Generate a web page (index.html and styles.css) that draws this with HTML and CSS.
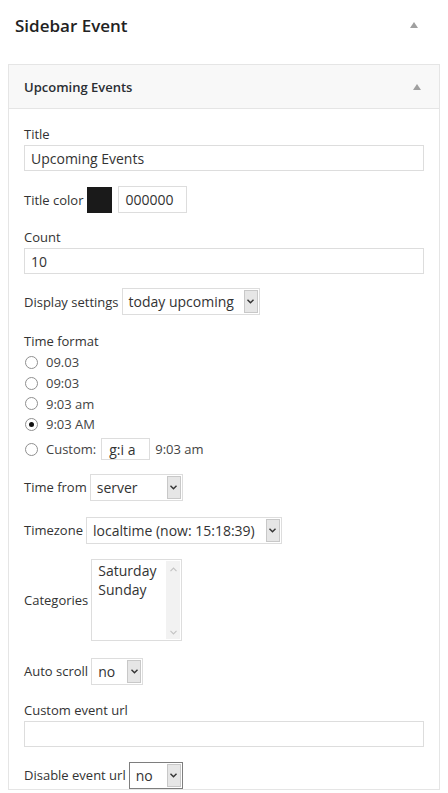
FILE: index.html
```html
<!DOCTYPE html>
<html>
<head>
<meta charset="utf-8">
<link rel="stylesheet" href="styles.css">
</head>
<body>
<div class="page">
  <div class="sidebar-head">
    <h2 class="sidebar-title">Sidebar Event</h2>
    <span class="tri"></span>
  </div>
  <div class="widget">
    <div class="widget-head">
      <h3 class="widget-title">Upcoming Events</h3>
      <span class="tri"></span>
    </div>
    <div class="widget-body">
      <div class="field">
        <div class="label">Title</div>
        <div class="input wide">Upcoming Events</div>
      </div>
      <div class="row r-color">
        <span class="label">Title color</span>
        <span class="swatch"></span>
        <span class="input hex">000000</span>
      </div>
      <div class="field f-count">
        <div class="label">Count</div>
        <div class="input wide">10</div>
      </div>
      <div class="row r-display">
        <span class="label">Display settings</span>
        <span class="select s-display"><span class="val">today upcoming</span><span class="arrow"><svg width="7" height="5" viewBox="0 0 7 5"><path d="M0.5 0.8 L3.5 3.8 L6.5 0.8" fill="none" stroke="#333" stroke-width="1.4"/></svg></span></span>
      </div>
      <div class="field f-time">
        <div class="label">Time format</div>
        <div class="radios">
          <div class="radio"><span class="dot"></span><span>09.03</span></div>
          <div class="radio"><span class="dot"></span><span>09:03</span></div>
          <div class="radio"><span class="dot"></span><span>9:03 am</span></div>
          <div class="radio"><span class="dot on"></span><span>9:03 AM</span></div>
          <div class="radio custom"><span class="dot"></span><span>Custom:</span><span class="input cust">g:i a</span><span class="preview">9:03 am</span></div>
        </div>
      </div>
      <div class="row r-from">
        <span class="label">Time from</span>
        <span class="select s-from"><span class="val">server</span><span class="arrow"><svg width="7" height="5" viewBox="0 0 7 5"><path d="M0.5 0.8 L3.5 3.8 L6.5 0.8" fill="none" stroke="#333" stroke-width="1.4"/></svg></span></span>
      </div>
      <div class="row r-tz">
        <span class="label">Timezone</span>
        <span class="select s-tz"><span class="val">localtime (now: 15:18:39)</span><span class="arrow"><svg width="7" height="5" viewBox="0 0 7 5"><path d="M0.5 0.8 L3.5 3.8 L6.5 0.8" fill="none" stroke="#333" stroke-width="1.4"/></svg></span></span>
      </div>
      <div class="row r-cat">
        <span class="label">Categories</span>
        <span class="listbox">
          <span class="options"><span>Saturday</span><span>Sunday</span></span>
          <span class="scroll">
            <svg width="7" height="5" viewBox="0 0 7 5"><path d="M0.5 4.2 L3.5 1.2 L6.5 4.2" fill="none" stroke="#c4c4c4" stroke-width="1.2"/></svg>
            <svg width="7" height="5" viewBox="0 0 7 5"><path d="M0.5 0.8 L3.5 3.8 L6.5 0.8" fill="none" stroke="#c4c4c4" stroke-width="1.2"/></svg>
          </span>
        </span>
      </div>
      <div class="row r-auto">
        <span class="label">Auto scroll</span>
        <span class="select s-no"><span class="val">no</span><span class="arrow"><svg width="7" height="5" viewBox="0 0 7 5"><path d="M0.5 0.8 L3.5 3.8 L6.5 0.8" fill="none" stroke="#333" stroke-width="1.4"/></svg></span></span>
      </div>
      <div class="field f-url">
        <div class="label">Custom event url</div>
        <div class="input wide"></div>
      </div>
      <div class="row r-disable">
        <span class="label">Disable event url</span>
        <span class="select s-no focus"><span class="val">no</span><span class="arrow"><svg width="7" height="5" viewBox="0 0 7 5"><path d="M0.5 0.8 L3.5 3.8 L6.5 0.8" fill="none" stroke="#333" stroke-width="1.4"/></svg></span></span>
      </div>
    </div>
  </div>
</div>
</body>
</html>
```

FILE: styles.css
```css
html, body {
  margin: 0;
  padding: 0;
  background: #fff;
}
body {
  font-family: "Open Sans", "Noto Sans", sans-serif;
  color: #333;
  font-size: 13px;
  width: 448px;
  height: 793px;
  overflow: hidden;
}
.page {
  padding: 0 8px;
}
.sidebar-head {
  display: flex;
  align-items: center;
  justify-content: space-between;
  height: 50px;
  padding: 0 22px 0 7px;
  margin-bottom: 14px;
}
.sidebar-title {
  margin: 0;
  font-size: 17px;
  font-weight: 600;
  color: #222;
}
.tri {
  width: 0;
  height: 0;
  border-left: 4px solid transparent;
  border-right: 4px solid transparent;
  border-bottom: 6px solid #a0a0a0;
}
.widget {
  border: 1px solid #e5e5e5;
  background: #fff;
}
.widget-head {
  display: flex;
  align-items: center;
  justify-content: space-between;
  height: 43px;
  background: #f8f8f8;
  border-bottom: 1px solid #e5e5e5;
  padding: 0 18px 0 15px;
}
.widget-title {
  margin: 0;
  font-size: 13px;
  font-weight: 600;
  color: #2a2e33;
}
.widget-body {
  padding: 16px 15px 0 15px;
  display: flex;
  flex-direction: column;
}
.label {
  font-size: 13px;
  line-height: 18px;
  color: #333;
}
.field .label {
  margin-bottom: 2px;
}
.input {
  box-sizing: border-box;
  border: 1px solid #ddd;
  background: #fff;
  color: #333;
  display: flex;
  align-items: center;
}
.wide {
  height: 26px;
  font-size: 14px;
  padding: 0 6px;
}
.row {
  display: flex;
  align-items: center;
  gap: 3px;
}
.r-color {
  margin-top: 15px;
  gap: 3px;
}
.swatch {
  width: 25px;
  height: 26px;
  background: #1a1a1a;
}
.hex {
  width: 69px;
  height: 27px;
  padding: 0 7px;
  font-size: 14px;
  margin-left: 3px;
}
.f-count {
  margin-top: 15px;
}
.r-display {
  margin-top: 14px;
}
.select {
  box-sizing: border-box;
  display: inline-flex;
  align-items: stretch;
  border: 1px solid #ddd;
  background: #fff;
  height: 27px;
  padding: 1px;
  font-size: 14px;
  color: #333;
}
.select .val {
  flex: 1;
  display: flex;
  align-items: center;
  padding-left: 5px;
  white-space: nowrap;
}
.select .arrow {
  width: 14px;
  background: #e6e6e6;
  border: 1px solid #c8c8c8;
  box-sizing: border-box;
  display: flex;
  align-items: center;
  justify-content: center;
}
.s-display { width: 138px; }
.s-from { width: 93px; }
.s-tz { width: 196px; }
.s-no { width: 52px; }
.select.focus {
  border-color: #7e7e7e;
  width: 54px;
}
.f-time {
  margin-top: 17px;
}
.radios {
  display: flex;
  flex-direction: column;
  margin-top: 2px;
}
.radio {
  display: flex;
  align-items: center;
  height: 20.7px;
  gap: 8px;
  padding-left: 1px;
  font-size: 13px;
  color: #444;
}
.dot {
  box-sizing: border-box;
  width: 13px;
  height: 13px;
  border: 1px solid #8f8f8f;
  border-radius: 50%;
  background: #fff;
  display: flex;
  align-items: center;
  justify-content: center;
}
.dot.on::after {
  content: "";
  width: 5px;
  height: 5px;
  border-radius: 50%;
  background: #111;
}
.radio.custom {
  height: 23px;
  margin-top: 3px;
}
.cust {
  width: 49px;
  height: 22px;
  font-size: 14px;
  padding: 0 7px;
  margin-left: -3px;
}
.preview {
  margin-left: -3px;
}
.r-from {
  margin-top: 13px;
}
.r-tz {
  margin-top: 16px;
}
.r-cat {
  margin-top: 15px;
}
.listbox {
  box-sizing: border-box;
  width: 91px;
  height: 82px;
  border: 1px solid #ddd;
  display: flex;
  padding: 1px;
  background: #fff;
}
.options {
  flex: 1;
  display: flex;
  flex-direction: column;
  padding: 0 0 0 5px;
  font-size: 14px;
  line-height: 19px;
  color: #333;
}
.scroll {
  width: 14px;
  background: #f2f2f2;
  display: flex;
  flex-direction: column;
  justify-content: space-between;
  align-items: center;
  padding: 6px 0 4px;
}
.r-auto {
  margin-top: 17px;
}
.f-url {
  margin-top: 16px;
}
.r-disable {
  margin-top: 15px;
}
```
